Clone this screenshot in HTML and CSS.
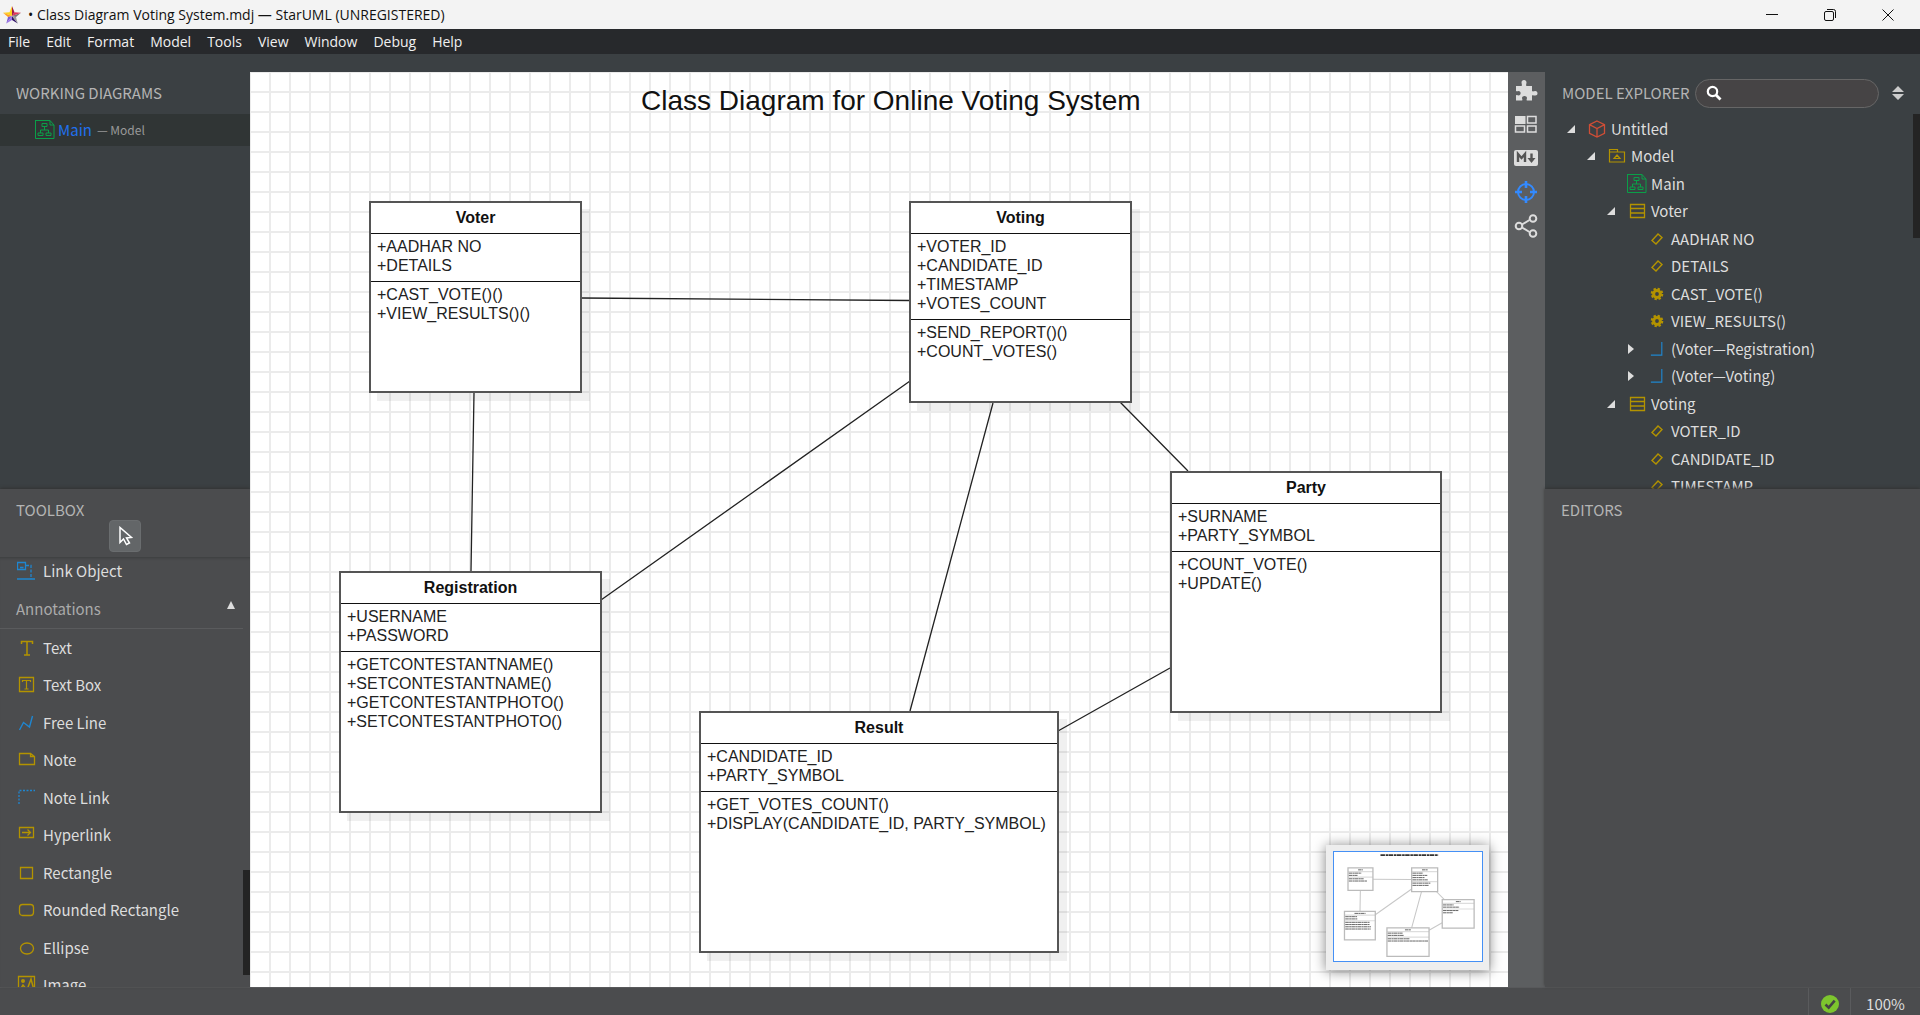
FILE: index.html
```html
<!DOCTYPE html>
<html lang="en">
<head>
<meta charset="utf-8">
<title>Class Diagram Voting System.mdj — StarUML</title>
<link rel="stylesheet" href="styles.css">
</head>
<body>
<svg class="sprite" aria-hidden="true">
  <symbol id="i-diagram" viewBox="0 0 20 20"><path d="M.5 0v18.500h18.500V5l-4-4.500H0M15 .5V5h4M7 3.500h5v3H7zM9.500 6.500v3.500M5.500 13v-3h8v3M3 13h5v2.500H3zM11 13h5v2.500h-5z" fill="none" stroke="currentColor"/></symbol>
  <symbol id="i-cube" viewBox="0 0 18 18"><path d="M9 1l7.500 3.700v8.600L9 17l-7.500-3.700V4.700zM1.500 4.700L9 8.500l7.500-3.800M9 8.500V17" fill="none" stroke="currentColor" stroke-width="1.300"/></symbol>
  <symbol id="i-model" viewBox="0 0 18 18"><path d="M1.500 15V2.500h8V5h7v10zM1 5h9M6 11.500h6L9 8z" fill="none" stroke="currentColor" stroke-width="1.200"/></symbol>
  <symbol id="i-class" viewBox="0 0 18 18"><path d="M2.500 2.500h14v13h-14zM2.500 6.500h14M2.500 11h14" fill="none" stroke="currentColor" stroke-width="1.300"/></symbol>
  <symbol id="i-attr" viewBox="0 0 14 14"><path d="M2 8.500L8 2l4 3.500L6 12z" fill="none" stroke="currentColor" stroke-width="1.400"/></symbol>
  <symbol id="i-op" viewBox="0 0 14 14"><circle cx="7" cy="7" r="3.400" fill="none" stroke="currentColor" stroke-width="3"/><circle cx="7" cy="7" r="5.200" fill="none" stroke="currentColor" stroke-width="2.200" stroke-dasharray="2.300 1.780"/></symbol>
  <symbol id="i-assoc" viewBox="0 0 14 16"><path d="M0 15h12.500V0" fill="none" stroke="currentColor" stroke-width="1.300"/></symbol>
  <symbol id="i-open" viewBox="0 0 8 8"><path d="M8 0v8H0z" fill="#ddd"/></symbol>
  <symbol id="i-shut" viewBox="0 0 8 12"><path d="M1 1l6 5-6 5z" fill="#ddd"/></symbol>
</svg>
<div class="app">
  <header class="titlebar">
    <svg class="logo" viewBox="0 0 20 20" aria-hidden="true"><path d="M10 1L7.500 7.200 1 7.800 10 11z" fill="#ffd21e"/><path d="M1 7.800l5 4.200 4-1z" fill="#ff9d1c"/><path d="M6 12l-1.700 6.500L10 11z" fill="#7d5ad0"/><path d="M10 11l-5.700 7.500L10 15z" fill="#9b74e8"/><path d="M10 11v4l5.700 3.500z" fill="#33146b"/><path d="M10 11l5.700 7.500L14 12z" fill="#999"/><path d="M10 11l4 1 5-4.200z" fill="#777"/><path d="M10 11l9-3.200-6.500-.6z" fill="#e2345a"/><path d="M10 11l2.500-3.800L10 1z" fill="#a01c48"/></svg>
    <h1>• Class Diagram Voting System.mdj — StarUML (UNREGISTERED)</h1>
    <div class="window-buttons">
      <button aria-label="Minimize"><svg viewBox="0 0 14 14"><path d="M1 6.500h12"/></svg></button>
      <button aria-label="Restore"><svg viewBox="0 0 14 14"><rect x="1.500" y="3.500" width="9" height="9" rx="1.500"/><path d="M4 1.500h6.500a2 2 0 0 1 2 2V10"/></svg></button>
      <button aria-label="Close"><svg viewBox="0 0 14 14"><path d="M1.500 1.500l11 11M12.500 1.500l-11 11"/></svg></button>
    </div>
  </header>
  <nav class="menubar">
    <button>File</button><button>Edit</button><button>Format</button><button>Model</button><button>Tools</button><button>View</button><button>Window</button><button>Debug</button><button>Help</button>
  </nav>
  <main class="workspace">
    <aside class="sidebar">
      <section class="panel working">
        <h2>WORKING DIAGRAMS</h2>
        <a class="working-item" href="#main"><svg class="icon20 green"><use href="#i-diagram"/></svg><span>Main</span><small>— Model</small></a>
      </section>
      <section class="panel lower toolbox">
        <h2>TOOLBOX</h2>
        <button class="select-tool" aria-label="Select"><svg viewBox="0 0 16 20"><path d="M3 1.500v15l3.500-3.500 3 5.500 3-1.500-3-5 5-.5z" fill="none" stroke="#fff" stroke-width="1.500"/></svg></button>
        <div class="tools">
          <ul>
            <li class="link-object"><button><svg class="blue" viewBox="0 0 20 20"><path d="M.5 1.500h8v7h-8zM3 6.500h3.500M0 18h18" fill="none" stroke="currentColor" stroke-width="1.300"/><path d="M9 4.500h5V18" fill="none" stroke="currentColor" stroke-dasharray="3 1.500" stroke-width="1.300"/></svg>Link Object</button></li>
          </ul>
          <button class="group">Annotations<svg viewBox="0 0 8 8"><path d="M4 0l4 8H0z" fill="#ddd"/></svg></button>
          <ul>
            <li><button><svg viewBox="0 0 20 20"><path d="M4.500 6V3.500h11V6M10 3.500v13.500M7 17h6" fill="none" stroke="currentColor" stroke-width="1.500"/></svg>Text</button></li>
            <li><button><svg viewBox="0 0 20 20"><path d="M2.500 2.500h14v14h-14z" fill="none" stroke="currentColor" stroke-width="1.300"/><path d="M5.500 7V5.500h8V7M9.500 5.500V14M7.500 14h4" fill="none" stroke="currentColor" stroke-width="1.200"/></svg>Text Box</button></li>
            <li><button><svg class="blue" viewBox="0 0 20 20"><path d="M2.500 17l4-7.500L12.500 14 15.500 3" fill="none" stroke="currentColor" stroke-width="1.400"/></svg>Free Line</button></li>
            <li><button><svg viewBox="0 0 20 20"><path d="M2.500 3.500h11l4 3v8h-15zM13.500 3.500v3h4" fill="none" stroke="currentColor" stroke-width="1.300"/></svg>Note</button></li>
            <li><button><svg class="blue" viewBox="0 0 20 20"><path d="M2 16V2.500h16" fill="none" stroke="currentColor" stroke-dasharray="2 1.500" stroke-width="1.300"/></svg>Note Link</button></li>
            <li><button><svg viewBox="0 0 20 20"><path d="M2.500 2.500h14v10h-14zM5 7.500h8.500M10.500 4.500l3 3-3 3" fill="none" stroke="currentColor" stroke-width="1.300"/></svg>Hyperlink</button></li>
            <li><button><svg viewBox="0 0 20 20"><path d="M3.500 4.500h12v11h-12z" fill="none" stroke="currentColor" stroke-width="1.300"/></svg>Rectangle</button></li>
            <li><button><svg viewBox="0 0 20 20"><rect x="2.500" y="4.500" width="14" height="11" rx="3" fill="none" stroke="currentColor" stroke-width="1.300"/></svg>Rounded Rectangle</button></li>
            <li><button><svg viewBox="0 0 20 20"><ellipse cx="10" cy="10.500" rx="6.500" ry="5.500" fill="none" stroke="currentColor" stroke-width="1.300"/></svg>Ellipse</button></li>
            <li><button><svg viewBox="0 0 20 20"><path d="M1.500 1.500h16v14h-16z" fill="none" stroke="currentColor" stroke-width="1.300"/><circle cx="6" cy="6" r="2" fill="currentColor"/><path d="M3 15l3-5 4 5 4-11 3 11" fill="none" stroke="currentColor" stroke-width="1.500"/></svg>Image</button></li>
          </ul>
        </div>
        <div class="thumb tools-thumb"></div>
      </section>
    </aside>

    <section class="canvas" aria-label="Diagram">
      <svg class="links" aria-hidden="true">
        <path d="M331 226L660 228.500M224 321L221 499M660 309L351 528M743 331L660 639M870 330L938 399M920 596L808 659"/>
      </svg>
      <p class="diagram-title">Class Diagram for Online Voting System</p>
      <article class="uml voter"><h3>Voter</h3>
        <ul><li>+AADHAR NO</li><li>+DETAILS</li></ul>
        <ul><li>+CAST_VOTE()()</li><li>+VIEW_RESULTS()()</li></ul></article>
      <article class="uml voting"><h3>Voting</h3>
        <ul><li>+VOTER_ID</li><li>+CANDIDATE_ID</li><li>+TIMESTAMP</li><li>+VOTES_COUNT</li></ul>
        <ul><li>+SEND_REPORT()()</li><li>+COUNT_VOTES()</li></ul></article>
      <article class="uml registration"><h3>Registration</h3>
        <ul><li>+USERNAME</li><li>+PASSWORD</li></ul>
        <ul><li>+GETCONTESTANTNAME()</li><li>+SETCONTESTANTNAME()</li><li>+GETCONTESTANTPHOTO()</li><li>+SETCONTESTANTPHOTO()</li></ul></article>
      <article class="uml result"><h3>Result</h3>
        <ul><li>+CANDIDATE_ID</li><li>+PARTY_SYMBOL</li></ul>
        <ul><li>+GET_VOTES_COUNT()</li><li>+DISPLAY(CANDIDATE_ID, PARTY_SYMBOL)</li></ul></article>
      <article class="uml party"><h3>Party</h3>
        <ul><li>+SURNAME</li><li>+PARTY_SYMBOL</li></ul>
        <ul><li>+COUNT_VOTE()</li><li>+UPDATE()</li></ul></article>
      <div class="minimap">
        <svg viewBox="0 0 1258 915" aria-hidden="true">
          <g fill="none" stroke="#c8c8c8" stroke-width="9">
            <path d="M331 226L660 228M224 321L221 499M660 309L351 528M744 331L660 639M870 330L938 399M920 596L808 659"/>
            <path d="M119 161h212M119 208h212M660 161h221M660 246h221M89 531h262M89 578h262M450 671h358M450 718h358M920 431h271M920 478h271" stroke="#ddd"/>
            <path d="M119 129h212v192H119zM660 129h221v202H660zM89 499h262v242H89zM450 639h358v242H450zM920 399h271v242H920z" stroke="#bbb" stroke-width="11"/>
          </g>
          <path d="M395 20h491" stroke="#333" stroke-width="15" stroke-dasharray="38 6 22 4"/>
          <path d="M205 146h40M748 146h48M174 516h94M603 656h50M1036 416h40M126 174h106M126 193h74M126 222h126M126 241h154M667 174h90M667 193h126M667 212h102M667 231h130M667 259h152M667 278h140M96 544h100M96 563h102M96 592h208M96 611h206M96 630h218M96 649h216M457 684h126M457 703h138M457 732h184M457 751h342M927 444h90M927 463h138M927 492h130M927 511h84" stroke="#444" stroke-width="7" stroke-dasharray="30 3 17 2"/>
        </svg>
      </div>
    </section>

    <nav class="rail" aria-label="Extensions">
      <button aria-label="Extension Manager"><svg viewBox="0 0 24 24"><path d="M2 8h5.500c1-1 0-1.800 0-3.500C7.500 3 8.500 2 10 2s2.500 1 2.500 2.500c0 1.700-1 2.500 0 3.500H18v5c1 1 1.800 0 3.300 0 1.400 0 2.200 1 2.200 2.300s-.8 2.300-2.200 2.300c-1.500 0-2.300-1-3.300 0v5h-5c-1-1 0-1.600 0-2.700 0-1.300-1.200-2-2.500-2S8 18.600 8 19.900c0 1.100 1 1.700 0 2.700H2v-5c.8-1 1.500-.2 2.600-.2 1.300 0 2-1 2-2.200s-.7-2.200-2-2.200c-1.100 0-1.800.8-2.600 0z" fill="#ddd"/></svg></button>
      <button aria-label="Layout"><svg viewBox="0 0 24 24"><path d="M1 4h10.500v8H1z" fill="#ddd"/><path d="M13.500 4.500h8.500v6.500h-8.500zM1.500 14h9v6h-9zM13.500 14h8.500v6h-8.500z" fill="none" stroke="#ddd" stroke-width="1.500"/></svg></button>
      <button aria-label="Markdown"><svg class="wide" viewBox="0 0 26 24"><rect x="1" y="4" width="24" height="16" rx="2" fill="#ddd"/><path d="M5 16V8l3.500 4L12 8v8M18.500 7.500V13" fill="none" stroke="#555" stroke-width="2.400"/><path d="M14.500 12h8L18.500 17z" fill="#555"/></svg></button>
      <button aria-label="Navigator"><svg viewBox="0 0 24 24"><circle cx="12" cy="12" r="8" fill="none" stroke="#338aff" stroke-width="2"/><path d="M12 1v7M12 16v7M1 12h7M16 12h7" stroke="#338aff" stroke-width="2.600"/></svg></button>
      <button aria-label="Relationships"><svg viewBox="0 0 24 24"><path d="M8 10.500l7.500-4.500M8 13.500l7.500 4.500" stroke="#ddd" stroke-width="2"/><g fill="none" stroke="#ddd" stroke-width="2"><circle cx="5" cy="12" r="3.300"/><circle cx="19" cy="4.500" r="3.300"/><circle cx="19" cy="19.500" r="3.300"/></g></svg></button>
    </nav>

    <aside class="sidebar">
      <section class="panel explorer">
        <div class="explorer-head">
          <h2>MODEL EXPLORER</h2>
          <label class="search"><svg viewBox="0 0 16 16" aria-hidden="true"><circle cx="6.500" cy="6.500" r="4.700" fill="none" stroke="#fff" stroke-width="2.200"/><path d="M10 10l4.500 4.500" stroke="#fff" stroke-width="2.800"/></svg><input type="text" aria-label="Search model"></label>
          <button class="sort" aria-label="Sort"><svg viewBox="0 0 12 16"><path d="M6 1l6 6H0zM6 15l6-6H0z" fill="#ccc"/></svg></button>
        </div>
        <ul class="tree">
          <li class="d0"><svg class="caret"><use href="#i-open"/></svg><svg class="ico red"><use href="#i-cube"/></svg>Untitled</li>
          <li class="d1"><svg class="caret"><use href="#i-open"/></svg><svg class="ico"><use href="#i-model"/></svg>Model</li>
          <li class="d2"><svg class="caret"></svg><svg class="ico big green"><use href="#i-diagram"/></svg>Main</li>
          <li class="d2"><svg class="caret"><use href="#i-open"/></svg><svg class="ico"><use href="#i-class"/></svg>Voter</li>
          <li class="d3"><svg class="caret"></svg><svg class="ico small"><use href="#i-attr"/></svg>AADHAR NO</li>
          <li class="d3"><svg class="caret"></svg><svg class="ico small"><use href="#i-attr"/></svg>DETAILS</li>
          <li class="d3"><svg class="caret"></svg><svg class="ico small"><use href="#i-op"/></svg>CAST_VOTE()</li>
          <li class="d3"><svg class="caret"></svg><svg class="ico small"><use href="#i-op"/></svg>VIEW_RESULTS()</li>
          <li class="d3"><svg class="caret shut"><use href="#i-shut"/></svg><svg class="ico small blue"><use href="#i-assoc"/></svg>(Voter—Registration)</li>
          <li class="d3"><svg class="caret shut"><use href="#i-shut"/></svg><svg class="ico small blue"><use href="#i-assoc"/></svg>(Voter—Voting)</li>
          <li class="d2"><svg class="caret"><use href="#i-open"/></svg><svg class="ico"><use href="#i-class"/></svg>Voting</li>
          <li class="d3"><svg class="caret"></svg><svg class="ico small"><use href="#i-attr"/></svg>VOTER_ID</li>
          <li class="d3"><svg class="caret"></svg><svg class="ico small"><use href="#i-attr"/></svg>CANDIDATE_ID</li>
          <li class="d3"><svg class="caret"></svg><svg class="ico small"><use href="#i-attr"/></svg>TIMESTAMP</li>
        </ul>
        <div class="thumb tree-thumb"></div>
      </section>
      <section class="panel lower"><h2>EDITORS</h2></section>
    </aside>
  </main>
  <footer class="statusbar">
    <span class="valid"><svg viewBox="0 0 18 18" role="img" aria-label="Valid"><circle cx="9" cy="9" r="9" fill="#7dc52e"/><path d="M4.500 9.500l3.200 3.200 6-7" fill="none" stroke="#444" stroke-width="2.600"/></svg></span>
    <button class="zoom">100%</button>
  </footer>
</div>
</body>
</html>
```
FILE: styles.css
```css
* { box-sizing: border-box; }
body {
  margin: 0;
  font-family: "Noto Sans CJK SC", sans-serif;
  font-size: 15px;
  line-height: 20px;
  color: #ddd;
}
button {
  font: inherit;
  color: inherit;
  background: none;
  border: 0;
  padding: 0;
}
h1, h2, h3, p, ul { margin: 0; padding: 0; font-weight: normal; }
ul { list-style: none; }
svg { display: block; flex: none; }
.sprite { position: absolute; width: 0; height: 0; }

.app {
  display: grid;
  grid-template-rows: 29px 25px minmax(0, 1fr) 28px;
  height: 100vh;
}

.titlebar {
  display: flex;
  align-items: center;
  gap: 6px;
  padding: 0 3px 0 2px;
  background: #f3f3f3;
  color: #111;
  font-family: "Open Sans", sans-serif;
}
.logo { width: 20px; height: 20px; }
.titlebar h1 { flex: 1; font-size: 14px; }
.window-buttons { display: flex; }
.window-buttons button {
  display: grid;
  place-items: center;
  width: 58px;
  height: 29px;
}
.window-buttons svg {
  width: 14px;
  height: 14px;
  fill: none;
  stroke: #111;
}

.menubar {
  display: flex;
  background: #27292c;
  color: #f0f0f0;
  font-family: "Open Sans", sans-serif;
  font-size: 14px;
}
.menubar button { padding: 0 8px; }

.workspace {
  display: grid;
  grid-template-columns: 250px minmax(0, 1fr) 37px 375px;
  min-height: 0;
  background: #3b4043;
}
.sidebar {
  display: grid;
  grid-template-rows: minmax(0, 7fr) minmax(0, 8fr);
  min-height: 0;
}
.panel {
  position: relative;
  display: flex;
  flex-direction: column;
  overflow: hidden;
  background: #3b4043;
}
.lower { background: #4b4c4e; box-shadow: 0 -1px 3px #333; }
.panel h2 { font-size: 15px; color: #b4b4b4; }
.working { padding-top: 29px; }
.working h2, .lower h2 { padding-left: 16px; }
.lower { padding-top: 11px; }

.working-item {
  display: flex;
  align-items: center;
  gap: 3px;
  height: 32px;
  margin-top: 11px;
  padding-left: 35px;
  background: #303535;
  color: #2070ee;
  text-decoration: none;
}
.working-item small { font-size: 12px; color: #999; margin-left: 2px; }
.icon20 { width: 20px; height: 20px; }
.green { color: #0a9f48; }

.select-tool {
  display: grid;
  place-items: center;
  align-self: center;
  width: 32px;
  height: 32px;
  border: 1px solid #6a6d6f;
  border-radius: 4px;
  background: #636668;
}
.select-tool svg { width: 16px; height: 20px; }
.tools {
  flex: 1;
  min-height: 0;
  overflow: hidden;
  margin-top: 5px;
  box-shadow: inset 0 3px 3px -2px #3c3d3f;
}
.tools li { display: flex; height: 37px; }
.tools li:nth-child(even) { height: 38px; }
.tools li.link-object { height: 28px; }
.tools li button {
  display: flex;
  align-items: center;
  gap: 6px;
  width: 100%;
  padding-left: 17px;
}
.tools svg { width: 20px; height: 20px; color: #b39300; }
.tools svg.blue { color: #1f86d0; }
.group {
  display: flex;
  align-items: center;
  justify-content: space-between;
  width: 243px;
  height: 44px;
  padding: 4px 8px 0 16px;
  border-bottom: 1px solid #5a5b5d;
  color: #aaa;
}
.tools .group svg { width: 8px; height: 8px; margin-bottom: 8px; }
.thumb { position: absolute; right: 0; width: 7px; background: #242424; }
.tools-thumb { bottom: 12px; height: 105px; }
.tree-thumb { top: 60px; height: 124px; }

.canvas {
  position: relative;
  overflow: hidden;
  margin-top: 18px;
  background-color: #fff;
  background-image:
    linear-gradient(90deg, transparent 18px, #ebebeb 18px),
    linear-gradient(transparent 18px, #ebebeb 18px);
  background-size: 20px 20px;
  background-position: 1px 1px;
  color: #222;
  font-family: "Liberation Sans", sans-serif;
  font-size: 16px;
  line-height: 19px;
}
.links {
  position: absolute;
  inset: 0;
  width: 100%;
  height: 100%;
  fill: none;
  stroke: #222;
  stroke-width: 1.300;
}
.diagram-title {
  position: absolute;
  left: 391px;
  top: 12px;
  color: #111;
  font-size: 28px;
  line-height: 34px;
  white-space: nowrap;
}
.uml {
  position: absolute;
  border: 2px solid #555;
  background: #fff;
  box-shadow: 8px 8px 0 rgba(0, 0, 0, .06);
}
.uml h3 {
  height: 31px;
  padding-top: 5px;
  border-bottom: 1px solid #111;
  color: #111;
  font-size: 16px;
  font-weight: bold;
  text-align: center;
}
.uml ul { padding: 3px 0 6px 6px; white-space: nowrap; }
.uml ul + ul { border-top: 1px solid #111; }
.voter { left: 119px; top: 129px; width: 213px; height: 192px; }
.voting { left: 659px; top: 129px; width: 223px; height: 202px; }
.registration { left: 89px; top: 499px; width: 263px; height: 242px; }
.result { left: 449px; top: 639px; width: 360px; height: 242px; }
.party { left: 920px; top: 399px; width: 272px; height: 242px; }

.minimap {
  position: absolute;
  right: 19px;
  bottom: 17px;
  padding: 6px 6px 0 7px;
  width: 163px;
  height: 125px;
  background: #eee;
  box-shadow: 0 1px 12px rgba(0, 0, 0, .5);
}
.minimap svg {
  width: 150px;
  height: 111px;
  background: #fff;
  border: 1px solid #4590f5;
}

.rail {
  display: flex;
  flex-direction: column;
  margin-top: 18px;
  padding: 1px 2px 0 0;
  background: #5c5e60;
}
.rail button { display: grid; place-items: center; height: 34px; }
.rail svg { width: 24px; height: 24px; }
.rail svg.wide { width: 26px; }

.explorer-head {
  display: grid;
  grid-template-columns: 133px minmax(0, 1fr) 25px;
  align-items: center;
  flex: none;
  height: 58px;
  padding: 20px 16px 0 17px;
}
.explorer-head h2 { white-space: nowrap; }
.search {
  display: flex;
  align-items: center;
  height: 29px;
  padding: 0 10px;
  border: 1px solid #666;
  border-radius: 15px;
  background: #464445;
}
.search svg { width: 16px; height: 16px; }
.search input {
  flex: 1;
  min-width: 0;
  border: 0;
  outline: 0;
  background: none;
  color: #ddd;
  font: inherit;
}
.sort { justify-self: end; }
.sort svg { width: 12px; height: 16px; }
.tree { flex: none; padding-top: 3px; }
.tree li {
  display: flex;
  align-items: center;
  height: 27px;
  white-space: nowrap;
}
.tree li:nth-child(even) { height: 28px; }
.tree .caret { width: 8px; height: 8px; margin-right: 13px; }
.tree .shut { height: 12px; }
.tree .ico { width: 18px; height: 18px; margin-right: 5px; color: #b39300; }
.tree .big { width: 20px; height: 20px; margin: 0 4px 0 -1px; }
.tree .small { width: 14px; height: 14px; margin: 0 7px 0 2px; }
.tree .ico.green { color: #0a9f48; }
.tree .ico.red { color: #d04e36; }
.tree .ico.blue { color: #1f86d0; }
.d0 { padding-left: 22px; }
.d1 { padding-left: 42px; }
.d2 { padding-left: 62px; }
.d3 { padding-left: 82px; }

.statusbar {
  display: flex;
  justify-content: flex-end;
  background: #4b4c4e;
  border-top: 1px solid #58595b;
}
.valid, .zoom {
  display: grid;
  place-items: center;
  border-left: 1px solid #5a5b5d;
}
.valid { width: 42px; padding-top: 4px; }
.valid svg { width: 18px; height: 18px; }
.zoom { width: 70px; padding-top: 4px; }
```
